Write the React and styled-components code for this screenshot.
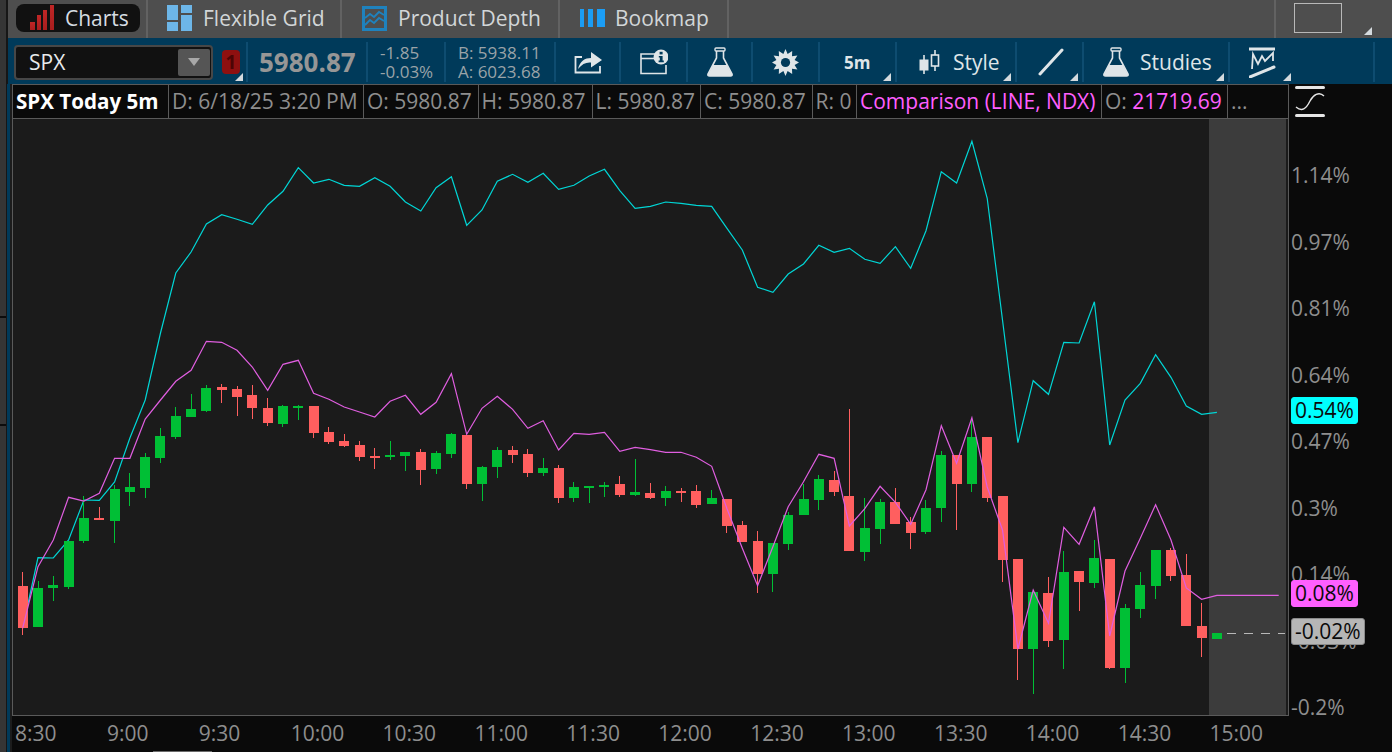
import React from 'react';
import styled, { createGlobalStyle } from 'styled-components';

const GlobalStyle = createGlobalStyle`
  html, body {
    margin: 0;
    padding: 0;
    height: 100%;
    background: #0a0a0a;
    overflow: hidden;
  }
  * { box-sizing: border-box; }
  body { font-family: "Open Sans", "Noto Sans", "Liberation Sans", sans-serif; }
`;

// [direction, wickTop, bodyTop, bodyBottom, wickBottom], page pixels
const candles = [
  ['r',572,586,628,635],['g',581,588,627,627],['g',576,585,588,601],['g',541,541,587,589],
  ['g',496,518,541,543],['r',507,518,520,520],['g',485,489,521,543],['g',473,487,492,506],
  ['g',453,457,488,498],['g',428,436,458,463],['g',407,416,437,439],['g',394,409,417,417],
  ['g',385,388,411,412],['r',384,387,390,403],['r',386,389,397,416],['r',385,395,408,419],
  ['r',398,408,423,426],['g',405,406,424,427],['g',405,406,408,420],['r',406,406,433,438],
  ['r',427,432,442,444],['r',434,441,446,447],['r',441,445,457,461],['r',448,456,458,469],
  ['g',441,455,457,460],['g',452,452,456,471],['r',449,452,470,485],['g',451,453,469,474],
  ['g',433,434,454,458],['r',435,435,484,489],['g',466,467,484,501],['g',447,450,467,478],
  ['r',446,450,455,463],['r',449,454,473,477],['g',458,468,473,476],['r',465,468,498,503],
  ['g',482,487,498,502],['g',486,486,488,503],['g',482,485,487,497],['r',476,484,495,497],
  ['g',459,492,495,496],['r',483,493,498,499],['g',486,491,498,506],['r',488,491,493,502],
  ['r',485,491,505,508],['g',490,498,504,504],['r',499,499,526,533],['r',521,525,542,542],
  ['r',531,541,574,593],['g',543,543,574,592],['g',512,515,544,550],['g',484,499,515,515],
  ['g',475,479,500,510],['r',471,480,492,496],['r',409,496,551,551],['g',498,528,552,561],
  ['g',499,502,529,544],['r',488,502,524,524],['r',517,522,533,549],['g',500,508,532,534],
  ['g',451,455,508,522],['r',455,455,484,530],['g',420,437,484,492],['r',437,437,498,502],
  ['r',496,496,560,582],['r',559,559,649,680],['g',592,592,649,694],['r',577,593,641,647],
  ['g',551,572,640,669],['r',571,571,582,611],['g',540,558,583,588],['r',559,559,668,669],
  ['g',604,608,668,683],['g',572,585,609,618],['g',550,550,586,599],['r',548,550,576,581],
  ['r',554,575,626,626],['r',603,626,638,657],['g',633,633,639,639],
];

const ndx = [
  628,557.7,558,540,500,500.3,482,438,400,333,273,252,224,214.7,219.3,224.3,205,191.3,167.7,183,
  179.3,185.3,186.3,177.7,186.3,202,211,187.7,176.7,225.3,210,181.3,174.3,182.3,173.3,189.3,185.3,
  176,169.3,190.7,208.3,206.3,202,203.3,205.3,206.3,228.3,250,287.3,292.3,274,264,245.3,252.3,248.3,
  259.3,263.3,246.7,268.3,230.7,171.7,183,141.3,198.3,320,442.7,380.7,394.3,342.3,343,301.7,445,400,
  383.3,354.7,377.3,406,414.3,412.3,
];

const comparison = [
  628,566.7,540,497.3,501,493.3,458.3,458.3,419,400,381.3,370.3,341.3,342.3,350.3,367,390.3,364.3,
  360.3,393.3,399.3,407,412,417,401.3,395.3,414.3,402.3,373.7,434.3,408.3,396.3,409.3,428.3,420.7,
  450,433.3,434.3,432.3,451.3,447.3,449.7,452.3,452.3,457.3,466.3,508.7,548.3,585.7,546.7,506.7,
  481.7,454.3,458.3,526,508.7,486.3,502.3,524.3,489.7,425.7,463.3,417.7,487,530,649,590,623.3,527.3,
  544.3,506.7,636,571,538.3,504.7,540,588,599.3,595.3,
];

const barX = (i) => 22.7 + 15.31 * i;
const toPoints = (ys) => ys.map((y, i) => `${barX(i).toFixed(1)},${y}`).join(' ');

const times = ['8:30','9:00','9:30','10:00','10:30','11:00','11:30','12:00','12:30','13:00','13:30','14:00','14:30','15:00'];
const prices = ['1.14%','0.97%','0.81%','0.64%','0.47%','0.3%','0.14%','-0.03%','-0.2%'];

const Page = styled.div`
  display: flex;
  width: 1392px;
  height: 752px;
  overflow: hidden;
  background: #0a0a0a;
`;

const Rail = styled.div`
  flex: 0 0 6px;
  display: flex;
  flex-direction: column;
  background: #353535;
`;

const RailPart = styled.div`
  height: ${(p) => p.$h}px;
  border-bottom: 2px solid #0c0c0c;
`;

const Main = styled.div`
  flex: 1;
  display: flex;
  flex-direction: column;
  min-width: 0;
  background: #161616;
`;

const TabBar = styled.div`
  display: flex;
  height: 38px;
  margin-left: 2px;
  background: #4e4e4e;
`;

const Tab = styled.div`
  flex: 0 0 ${(p) => p.$w}px;
  display: flex;
  align-items: center;
  gap: ${(p) => p.$gap || 11}px;
  padding-left: ${(p) => p.$pad || 0}px;
  padding-bottom: 2px;
  border-right: 2px solid #626262;
  font-size: 21px;
  color: #d2d6d8;
`;

const ActivePill = styled.div`
  display: flex;
  align-items: center;
  gap: 10px;
  width: 124px;
  height: 28px;
  margin-left: 8px;
  padding-left: 14px;
  border-radius: 8px;
  background: #111111;
  color: #d6dce2;
`;

const TabSpacer = styled.div`
  flex: 0 0 547px;
  border-right: 2px solid #626262;
`;

const LayoutBox = styled.div`
  position: relative;
  flex: 1;
  padding: 3px 0 0 18px;
`;

const LayoutFrame = styled.div`
  width: 48px;
  height: 30px;
  border: 1px solid #b8b8b8;
`;

const Corner = styled.span`
  position: absolute;
  right: ${(p) => p.$r ?? 4}px;
  bottom: ${(p) => p.$b ?? 1}px;
  width: 8px;
  height: 8px;
  background: #d4dade;
  clip-path: polygon(100% 0, 100% 100%, 0 100%);
`;

const Toolbar = styled.div`
  display: flex;
  height: 46px;
  margin-left: 2px;
  padding: 4px 0 2px;
  background: #003a5a;
`;

const ToolSection = styled.div`
  position: relative;
  flex: 0 0 ${(p) => p.$w}px;
  display: flex;
  align-items: center;
  justify-content: ${(p) => p.$justify || 'flex-start'};
  gap: ${(p) => p.$gap || 0}px;
  padding-left: ${(p) => p.$pad || 0}px;
  border-right: 2px solid #0e4c70;
  font-size: 21px;
  color: #dfe5e8;
`;

const SymbolBox = styled.div`
  display: flex;
  align-items: center;
  justify-content: space-between;
  width: 199px;
  height: 35px;
  padding: 0 1px 0 13px;
  border: 2px solid #474747;
  border-radius: 4px;
  background: #111111;
  font-size: 21px;
  color: #e8eaec;
`;

const SymbolArrow = styled.div`
  display: flex;
  align-items: center;
  justify-content: center;
  width: 32px;
  height: 27px;
  border-radius: 2px;
  background: #555555;
  &::after {
    content: '';
    width: 12px;
    height: 8px;
    background: #a8a8a8;
    clip-path: polygon(0 0, 100% 0, 50% 100%);
  }
`;

const LinkBadge = styled.div`
  display: flex;
  align-items: center;
  justify-content: center;
  width: 18px;
  height: 24px;
  margin-left: 9px;
  border-radius: 4px;
  background: #8e1010;
  color: #4c0505;
  font-size: 19px;
  font-weight: 700;
`;

const LastPrice = styled.div`
  font-size: 26px;
  font-weight: 700;
  color: #969696;
`;

const StackText = styled.div`
  display: flex;
  flex-direction: column;
  font-size: 17px;
  line-height: 19px;
  color: #9aa3a8;
`;

const BoldLabel = styled.span`
  font-size: 17px;
  font-weight: 700;
`;

const ChartRow = styled.div`
  flex: 1;
  min-height: 0;
  margin-left: 1px;
  padding-left: 2px;
  border-left: 3px solid #003a5a;
  background: #1c1c1c;
`;

const ChartGrid = styled.div`
  display: grid;
  grid-template-columns: 1277px 1fr;
  grid-template-rows: 35px 597px 36px;
  height: 100%;
`;

const LegendBar = styled.div`
  display: flex;
  border: 1px solid #5a5a5a;
  background: #0a0a0a;
  font-size: 21px;
  line-height: 33px;
  color: #8e8e8e;
  white-space: nowrap;
`;

const LegendCell = styled.div`
  flex: 0 0 ${(p) => p.$w}px;
  padding-left: ${(p) => p.$pad ?? 3}px;
  border-right: ${(p) => (p.$last ? 'none' : '1px solid #5a5a5a')};
  overflow: hidden;
`;

const Ticker = styled.span`
  font-size: 20.6px;
  font-weight: 700;
  color: #ffffff;
`;

const Magenta = styled.span`
  color: #ff5fff;
`;

const CornerTool = styled.div`
  display: flex;
  align-items: center;
  padding-left: 6px;
  background: #0a0a0a;
`;

const Plot = styled.div`
  border-left: 1px solid #5a5a5a;
  border-right: 1px solid #5a5a5a;
  border-bottom: 1px solid #5a5a5a;
  background: #1b1b1b;
  svg { display: block; }
`;

const PriceAxis = styled.div`
  position: relative;
  grid-row: span 2;
  padding: 23px 0 0 2px;
  background: #0a0a0a;
  font-size: 21px;
  color: #8e8e8e;
`;

const PriceTick = styled.div`
  height: 66.5px;
  line-height: 66.5px;
`;

const PriceBadge = styled.div`
  position: absolute;
  left: 2px;
  top: ${(p) => p.$top}px;
  height: 27px;
  padding: 0 3px;
  border-radius: 3px;
  background: ${(p) => p.$bg};
  border: 1px solid ${(p) => p.$edge || p.$bg};
  color: #0a0a0a;
  line-height: 25px;
`;

const TimeAxis = styled.div`
  position: relative;
  display: flex;
  padding-left: 3px;
  background: #0a0a0a;
  font-size: 21px;
  line-height: 34px;
  color: #8e8e8e;
`;

const TimeTick = styled.div`
  flex: 0 0 91.9px;
`;

const ScrollThumb = styled.div`
  position: absolute;
  left: 141px;
  bottom: 0;
  width: 59px;
  height: 1px;
  background: #6a6a6a;
`;

const BarsIcon = () => (
  <svg width="25" height="26" viewBox="0 0 25 26">
    <defs>
      <linearGradient id="bars" x1="0" y1="0" x2="0" y2="1">
        <stop offset="0" stopColor="#c02626" />
        <stop offset="1" stopColor="#a81e1e" />
      </linearGradient>
    </defs>
    <rect x="0" y="17" width="5" height="8" fill="url(#bars)" />
    <rect x="7" y="10" width="4" height="15" fill="url(#bars)" />
    <rect x="13" y="5" width="4" height="20" fill="url(#bars)" />
    <rect x="20" y="0" width="4" height="25" fill="url(#bars)" />
  </svg>
);

const GridIcon = () => (
  <svg width="25" height="26" viewBox="0 0 25 26" fill="#6db6e8">
    <rect x="0" y="0" width="11" height="15" />
    <rect x="14" y="0" width="11" height="8" />
    <rect x="0" y="17" width="11" height="9" />
    <rect x="14" y="10" width="11" height="16" />
  </svg>
);

const DepthIcon = () => (
  <svg width="25" height="25" viewBox="0 0 25 25" fill="none" stroke="#1f82bd">
    <rect x="1.5" y="1.5" width="22" height="22" strokeWidth="3" />
    <path d="M3 12 L8 8 L12 11 L17 6 L22 9" strokeWidth="1.8" />
    <path d="M3 19 L8 14 L12 17 L17 12 L22 15" strokeWidth="1.8" />
  </svg>
);

const BookmapIcon = () => (
  <svg width="25" height="18" viewBox="0 0 25 18" fill="#1b9df5">
    <rect x="0" y="0" width="4" height="18" />
    <rect x="8" y="0" width="5" height="18" />
    <rect x="17" y="0" width="8" height="18" />
  </svg>
);

const ShareIcon = () => (
  <svg width="28" height="24" viewBox="0 0 28 24" fill="none">
    <path d="M8 7 H1.5 V22.5 H26 V16" stroke="#dfe5e8" strokeWidth="1.8" />
    <path d="M4 19 C6 11 11 8 17 8 V2 L28 10 L17 17.5 V12.5 C12 12 8 14 4 19 Z" fill="#dfe5e8" />
  </svg>
);

const InfoIcon = () => (
  <svg width="28" height="26" viewBox="0 0 28 26" fill="none">
    <path d="M15 5 H1 V24.5 H26 V16" stroke="#dfe5e8" strokeWidth="1.6" />
    <path d="M1 9.5 H14" stroke="#dfe5e8" strokeWidth="1.6" />
    <circle cx="21" cy="8" r="7.5" fill="#dfe5e8" />
    <rect x="19.6" y="2.8" width="3" height="2.6" fill="#003a5a" />
    <path d="M18.8 7 H22.6 V11.6 H23.8 V13.2 H18.6 V11.6 H19.8 V8.6 H18.8 Z" fill="#003a5a" />
  </svg>
);

const FlaskIcon = () => (
  <svg width="26" height="30" viewBox="0 0 26 30" fill="none">
    <rect x="8" y="1" width="10" height="3" rx="1" stroke="#dfe5e8" strokeWidth="1.4" />
    <path d="M9.5 4 V11 L1 27 Q0.5 29 2.5 29 H23.5 Q25.5 29 25 27 L16.5 11 V4" stroke="#dfe5e8" strokeWidth="1.6" />
    <path d="M6 18 H20 L25 27.5 Q25.5 29 23.5 29 H2.5 Q0.5 29 1 27.5 Z" fill="#dfe5e8" />
  </svg>
);

const GearIcon = () => (
  <svg width="27" height="27" viewBox="0 0 27 27">
    <path
      d="M13.5 0 L15.6 5 L20.2 2 L20 7.2 L25.4 6.6 L22.6 11 L27 13.5 L22.6 16 L25.4 20.4 L20 19.8 L20.2 25 L15.6 22 L13.5 27 L11.4 22 L6.8 25 L7 19.8 L1.6 20.4 L4.4 16 L0 13.5 L4.4 11 L1.6 6.6 L7 7.2 L6.8 2 L11.4 5 Z"
      fill="#dfe5e8"
    />
    <circle cx="13.5" cy="13.5" r="4.6" fill="#003a5a" />
  </svg>
);

const CandleIcon = () => (
  <svg width="22" height="26" viewBox="0 0 22 26" fill="none" stroke="#dfe5e8">
    <path d="M5 6 V25 M16 1 V22" strokeWidth="1.6" />
    <rect x="1" y="11" width="8" height="10" fill="#dfe5e8" strokeWidth="1" />
    <rect x="12.5" y="6" width="7" height="11" fill="#003a5a" strokeWidth="1.6" />
  </svg>
);

const LineIcon = () => (
  <svg width="26" height="28" viewBox="0 0 26 28">
    <path d="M2 26 L24 2" stroke="#dfe5e8" strokeWidth="3" strokeLinecap="round" />
  </svg>
);

const DrawIcon = () => (
  <svg width="27" height="31" viewBox="0 0 27 31" fill="none" stroke="#dfe5e8">
    <path d="M0 2 H26" strokeWidth="3" />
    <path d="M3 22 L4 7 L9 17 L13 9 L16 14 L24 6 L24 14" strokeWidth="1.8" />
    <path d="M1 30 L25 20" strokeWidth="3" strokeLinecap="round" />
  </svg>
);

const CurveIcon = () => (
  <svg width="30" height="31" viewBox="0 0 30 31" fill="none">
    <rect x="0" y="0" width="30" height="3" rx="1.5" fill="#e6e6e6" />
    <rect x="0" y="28" width="30" height="3" rx="1.5" fill="#e6e6e6" />
    <path d="M1 21 C7 26 11 23 15 15 C18 9 24 5 29 10" stroke="#e6e6e6" strokeWidth="1.4" />
  </svg>
);

const PriceChart = () => (
  <svg width="1275" height="596" viewBox="13 119 1275 596">
    <rect x="1209" y="119" width="77" height="596" fill="#3c3c3c" />
    <polyline points={toPoints(ndx)} fill="none" stroke="#00d6d6" strokeWidth="1.2" />
    <g shapeRendering="crispEdges">
      {candles.map(([dir, top, bodyTop, bodyBottom, bottom], i) => {
        const x = barX(i);
        const color = dir === 'g' ? '#00bf35' : '#ff5f5f';
        return (
          <g key={i} fill={color}>
            <rect x={Math.floor(x)} y={top} width="1" height={bottom - top} />
            <rect x={Math.round(x) - 5} y={bodyTop} width="10" height={Math.max(bodyBottom - bodyTop, 2)} />
          </g>
        );
      })}
    </g>
    <polyline
      points={`${toPoints(comparison)} 1278.7,595.3`}
      fill="none"
      stroke="#e05ee0"
      strokeWidth="1.2"
    />
    <line
      x1="1227"
      y1="633.5"
      x2="1285"
      y2="633.5"
      stroke="#b8b8b8"
      strokeDasharray="9 8"
      shapeRendering="crispEdges"
    />
  </svg>
);

export default function App() {
  return (
    <>
      <GlobalStyle />
      <Page>
        <Rail>
          <RailPart $h={318} />
          <RailPart $h={108} />
        </Rail>
        <Main>
          <TabBar>
            <Tab $w={140}>
              <ActivePill>
                <BarsIcon />
                Charts
              </ActivePill>
            </Tab>
            <Tab $w={194} $pad={19} $gap={11}>
              <GridIcon />
              Flexible Grid
            </Tab>
            <Tab $w={218} $pad={20}>
              <DepthIcon />
              Product Depth
            </Tab>
            <Tab $w={169} $pad={20} $gap={10}>
              <BookmapIcon />
              Bookmap
            </Tab>
            <TabSpacer />
            <LayoutBox>
              <LayoutFrame />
              <Corner $r={20} $b={3} />
            </LayoutBox>
          </TabBar>
          <Toolbar>
            <ToolSection $w={240} $pad={6}>
              <SymbolBox>
                SPX
                <SymbolArrow />
              </SymbolBox>
              <LinkBadge>1</LinkBadge>
              <Corner $r={3} />
            </ToolSection>
            <ToolSection $w={120} $pad={11}>
              <LastPrice>5980.87</LastPrice>
            </ToolSection>
            <ToolSection $w={78} $pad={12}>
              <StackText>
                <span>-1.85</span>
                <span>-0.03%</span>
              </StackText>
            </ToolSection>
            <ToolSection $w={110} $pad={12}>
              <StackText>
                <span>B: 5938.11</span>
                <span>A: 6023.68</span>
              </StackText>
            </ToolSection>
            <ToolSection $w={65} $justify="center">
              <ShareIcon />
            </ToolSection>
            <ToolSection $w={67} $justify="center">
              <InfoIcon />
            </ToolSection>
            <ToolSection $w={65} $justify="center">
              <FlaskIcon />
            </ToolSection>
            <ToolSection $w={67} $justify="center">
              <GearIcon />
            </ToolSection>
            <ToolSection $w={77} $pad={24}>
              <BoldLabel>5m</BoldLabel>
              <Corner />
            </ToolSection>
            <ToolSection $w={120} $pad={22} $gap={12}>
              <CandleIcon />
              Style
              <Corner />
            </ToolSection>
            <ToolSection $w={67} $pad={21}>
              <LineIcon />
              <Corner />
            </ToolSection>
            <ToolSection $w={146} $pad={19} $gap={11}>
              <FlaskIcon />
              Studies
              <Corner />
            </ToolSection>
            <ToolSection $w={145} $pad={19}>
              <DrawIcon />
              <Corner $r={82} />
            </ToolSection>
          </Toolbar>
          <ChartRow>
            <ChartGrid>
              <LegendBar>
                <LegendCell $w={156} $pad={3}>
                  <Ticker>SPX Today 5m</Ticker>
                </LegendCell>
                <LegendCell $w={195}>D: 6/18/25 3:20 PM</LegendCell>
                <LegendCell $w={114.5}>O: 5980.87</LegendCell>
                <LegendCell $w={114}>H: 5980.87</LegendCell>
                <LegendCell $w={108.5}>L: 5980.87</LegendCell>
                <LegendCell $w={111.5}>C: 5980.87</LegendCell>
                <LegendCell $w={44.5}>R: 0</LegendCell>
                <LegendCell $w={245}>
                  <Magenta>Comparison (LINE, NDX)</Magenta>
                </LegendCell>
                <LegendCell $w={126}>
                  O: <Magenta>21719.69</Magenta>
                </LegendCell>
                <LegendCell $w={60} $last>...</LegendCell>
              </LegendBar>
              <CornerTool>
                <CurveIcon />
              </CornerTool>
              <Plot>
                <PriceChart />
              </Plot>
              <PriceAxis>
                {prices.map((p) => (
                  <PriceTick key={p}>{p}</PriceTick>
                ))}
                <PriceBadge $top={278} $bg="#00ffff">0.54%</PriceBadge>
                <PriceBadge $top={461} $bg="#ff5fff">0.08%</PriceBadge>
                <PriceBadge $top={499} $bg="#b6b6b6" $edge="#8a8a8a">-0.02%</PriceBadge>
              </PriceAxis>
              <TimeAxis>
                {times.map((t) => (
                  <TimeTick key={t}>{t}</TimeTick>
                ))}
                <ScrollThumb />
              </TimeAxis>
            </ChartGrid>
          </ChartRow>
        </Main>
      </Page>
    </>
  );
}
